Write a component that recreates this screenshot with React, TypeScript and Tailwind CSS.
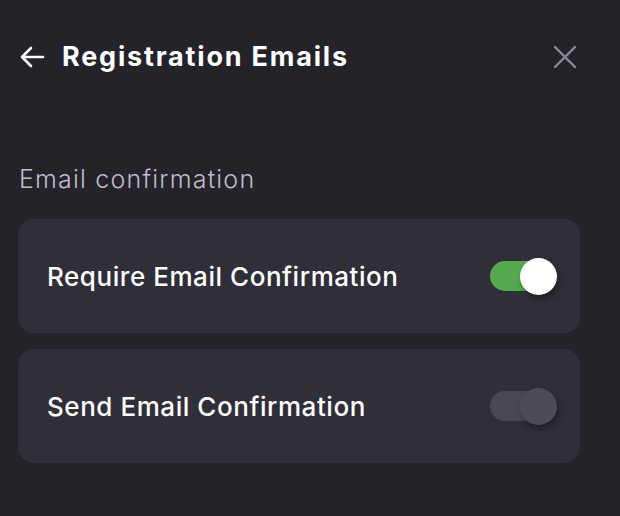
import { useState } from "react";

const Toggle = ({ on, onClick }: { on: boolean; onClick: () => void }) => (
  <button
    onClick={onClick}
    className="relative w-[67px] h-[38px] flex items-center"
    aria-pressed={on}
  >
    <span
      className={`absolute left-0 w-[58px] h-[30px] rounded-full ${
        on ? "bg-[#56a84e]" : "bg-[#4a4852]"
      }`}
    />
    <span
      className={`absolute right-0 w-[37px] h-[37px] rounded-full shadow-[2px_4px_6px_rgba(0,0,0,0.35)] ${
        on ? "bg-white" : "bg-[#4d4b55]"
      }`}
    />
  </button>
);

const SettingCard = ({
  label,
  on,
  onToggle,
}: {
  label: string;
  on: boolean;
  onToggle: () => void;
}) => (
  <div className="h-[114px] rounded-[16px] bg-[#302e38] flex items-center justify-between pl-[29px] pr-[23px]">
    <span className="text-white text-[26px] font-medium tracking-[0.55px]">
      {label}
    </span>
    <Toggle on={on} onClick={onToggle} />
  </div>
);

export default function App() {
  const [requireConfirm, setRequireConfirm] = useState(true);
  const [sendConfirm, setSendConfirm] = useState(false);

  return (
    <div className="w-[620px] h-[516px] bg-[#25232a] font-['Inter',sans-serif] pl-[18px] pr-[40px] pt-[37px] overflow-hidden">
      {/* Header */}
      <div className="h-[40px] flex items-center justify-between">
        <div className="flex items-center">
          <svg
            width="28"
            height="28"
            viewBox="0 0 28 28"
            fill="none"
            stroke="white"
            strokeWidth="2.6"
            strokeLinecap="round"
            strokeLinejoin="round"
          >
            <path d="M25 14H4M13 5l-9 9 9 9" />
          </svg>
          <h1 className="ml-[16px] mt-[1px] text-white text-[27px] font-bold tracking-[1.8px]">
            Registration Emails
          </h1>
        </div>
        <button className="mr-[2px]">
          <svg
            width="26"
            height="26"
            viewBox="0 0 26 26"
            fill="none"
            stroke="#8b8991"
            strokeWidth="2.4"
            strokeLinecap="round"
          >
            <path d="M3 3l20 20M23 3L3 23" />
          </svg>
        </button>
      </div>

      {/* Section */}
      <p className="mt-[86px] ml-[1px] text-[#c0bccc] text-[25px] font-light tracking-[1.2px] leading-[32px]">
        Email confirmation
      </p>

      <div className="mt-[24px] flex flex-col gap-[16px]">
        <SettingCard
          label="Require Email Confirmation"
          on={requireConfirm}
          onToggle={() => setRequireConfirm(!requireConfirm)}
        />
        <SettingCard
          label="Send Email Confirmation"
          on={sendConfirm}
          onToggle={() => setSendConfirm(!sendConfirm)}
        />
      </div>
    </div>
  );
}
